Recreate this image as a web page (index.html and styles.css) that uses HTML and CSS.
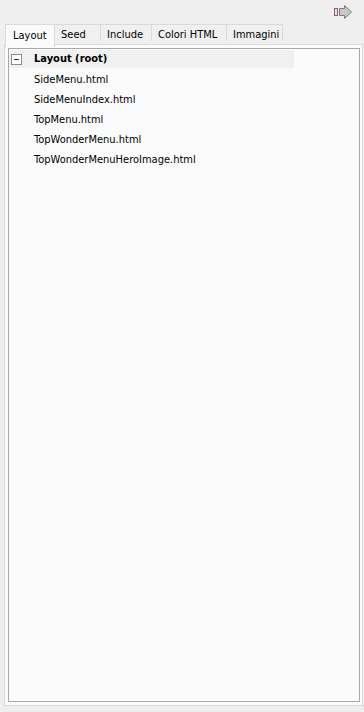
FILE: index.html
```html
<!DOCTYPE html>
<html>
<head>
<meta charset="utf-8">
<link rel="stylesheet" href="styles.css">
</head>
<body>
<div class="app">
  <div class="toolbar">
    <svg class="dock-icon" width="20" height="14" viewBox="0 0 20 14">
      <rect x="1.5" y="3.5" width="3" height="7" fill="#e8e0ec" stroke="#8a5a8a"/>
      <path d="M6.5 3.5 H11.5 V0.5 L18.5 7 L11.5 13.5 V10.5 H6.5 Z" fill="#c8c8c8" stroke="#7a7a7a"/>
    </svg>
  </div>
  <div class="tabs">
    <div class="tab active w-layout">Layout</div>
    <div class="tab w-seed">Seed</div>
    <div class="tab w-include">Include</div>
    <div class="tab w-colori">Colori HTML</div>
    <div class="tab w-immagini">Immagini</div>
  </div>
  <div class="page">
    <div class="tree">
      <div class="node root">
        <span class="toggle"><span class="minus"></span></span>
        <span class="label">Layout (root)</span>
      </div>
      <div class="node child">SideMenu.html</div>
      <div class="node child">SideMenuIndex.html</div>
      <div class="node child">TopMenu.html</div>
      <div class="node child">TopWonderMenu.html</div>
      <div class="node child">TopWonderMenuHeroImage.html</div>
    </div>
  </div>
</div>
</body>
</html>
```
FILE: styles.css
```css
html, body {
  margin: 0;
  padding: 0;
  background: #efefef;
  font-family: "DejaVu Sans Condensed", "DejaVu Sans", sans-serif;
  font-size: 11px;
  color: #000;
}
.app {
  width: 364px;
  height: 712px;
  display: flex;
  flex-direction: column;
  box-sizing: border-box;
}
.toolbar {
  height: 24px;
  display: flex;
  justify-content: flex-end;
  align-items: flex-start;
  padding: 5px 11px 0 0;
  box-sizing: border-box;
}
.dock-icon { display: block; }
.tabs {
  display: flex;
  align-items: flex-end;
  height: 20px;
  padding-left: 5px;
  box-sizing: border-box;
}
.tab {
  height: 17px;
  line-height: 16px;
  padding: 2px 0 0 6px;
  border: 1px solid #dadada;
  border-bottom: none;
  border-left: none;
  background: #f0f0f0;
  box-sizing: border-box;
  margin-bottom: 3px;
  white-space: nowrap;
}
.w-layout { width: 50px; }
.w-seed { width: 46px; }
.w-include { width: 51px; }
.w-colori { width: 75px; }
.w-immagini { width: 56px; }
.tab.active {
  height: 23px;
  margin-bottom: -3px;
  padding: 3px 0 0 7px;
  line-height: 15px;
  border: 1px solid #dadada;
  border-bottom: none;
  background: #fbfbfb;
  position: relative;
  z-index: 1;
}
.page {
  flex: 1;
  margin: 0 1px 6px 4px;
  padding: 3px 2px 3px 3px;
  background: #fbfbfb;
  border: 1px solid #dadada;
  display: flex;
  box-sizing: border-box;
}
.tree {
  flex: 1;
  border: 1px solid #a8a8a8;
  background: #fbfbfb;
  padding-top: 1px;
}
.node {
  height: 20px;
  line-height: 21px;
  white-space: nowrap;
}
.root {
  display: flex;
  align-items: center;
  width: 285px;
  background: #f0f0f0;
  height: 18px;
  line-height: 18px;
  margin-bottom: 1px;
}
.toggle {
  width: 9px;
  height: 9px;
  border: 1px solid #8c8c8c;
  background: #fff;
  margin-left: 2px;
  margin-right: 12px;
  position: relative;
  box-sizing: content-box;
}
.minus {
  position: absolute;
  left: 2px;
  top: 4px;
  width: 5px;
  height: 1px;
  background: #333;
}
.label { font-weight: bold; }
.child { padding-left: 25px; }
```
